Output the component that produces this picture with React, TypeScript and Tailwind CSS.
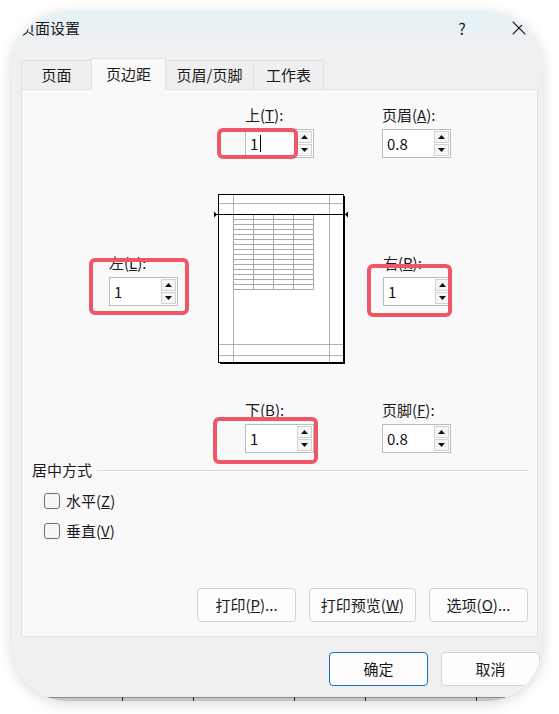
import React from 'react';
import { X } from 'lucide-react';

function Arrow({ up }: { up?: boolean }) {
  return (
    <span className="flex flex-1 items-center justify-center border border-[#d2d2d2] bg-[#f5f5f5]">
      <svg width="7" height="4" viewBox="0 0 7 4">
        <polygon points={up ? '0,4 3.5,0 7,4' : '0,0 3.5,4 7,0'} fill="#111" />
      </svg>
    </span>
  );
}

function Spin({ value, caret }: { value: string; caret?: boolean }) {
  return (
    <div className="flex h-[29px] w-[69px] border border-[#bcbcbc] bg-white">
      <div className="flex flex-1 items-center pl-[4px] text-[15px] leading-none text-[#111]">
        {value}
        {caret && <span className="ml-[2px] h-[17px] w-px bg-black" />}
      </div>
      <div className="flex w-[16px] flex-col gap-px py-px pr-px">
        <Arrow up />
        <Arrow />
      </div>
    </div>
  );
}

function Field({ label, value, caret }: { label: React.ReactNode; value: string; caret?: boolean }) {
  return (
    <div className="flex w-[69px] flex-col">
      <div className="h-[18px] whitespace-nowrap text-[15px] leading-[18px]">{label}</div>
      <div className="mt-[5px]">
        <Spin value={value} caret={caret} />
      </div>
    </div>
  );
}

function Btn({ children, className }: { children: React.ReactNode; className: string }) {
  return (
    <button className={`flex h-[34px] items-center justify-center rounded-[4px] border bg-[#fdfdfd] text-[15px] text-[#1a1a1a] ${className}`}>
      {children}
    </button>
  );
}

function Check({ children }: { children: React.ReactNode }) {
  return (
    <div className="flex h-[18px] items-center gap-[6px] pl-[22px]">
      <span className="h-[16px] w-[16px] rounded-[3px] border border-[#6f6f6f] bg-[#f6f6f6]" />
      <span className="text-[15px] leading-[18px]">{children}</span>
    </div>
  );
}

// 页面预览小图
function Preview() {
  const rows = Array.from({ length: 16 }, (_, i) => 20.5 + i * 5);
  const cols = [20.5, 40.5, 60.5, 80.5, 100.5];
  return (
    <svg width="136" height="172" viewBox="0 0 136 172" className="shrink-0">
      <rect x="5.5" y="0.5" width="125" height="168" fill="#fff" stroke="#000" />
      <line x1="131.5" y1="2" x2="131.5" y2="170" stroke="#000" />
      <line x1="7" y1="169.5" x2="132" y2="169.5" stroke="#000" />
      <g stroke="#b3b3b3">
        <line x1="20.5" y1="1" x2="20.5" y2="168" />
        <line x1="116.5" y1="1" x2="116.5" y2="168" />
        <line x1="6" y1="9.5" x2="130" y2="9.5" />
        <line x1="6" y1="150.5" x2="130" y2="150.5" />
        <line x1="6" y1="161.5" x2="130" y2="161.5" />
      </g>
      <g stroke="#a9a9a9">
        {rows.map((y) => (
          <line key={y} x1="20.5" y1={y} x2="100.5" y2={y} />
        ))}
        {cols.map((x) => (
          <line key={x} x1={x} y1="20.5" x2={x} y2="95.5" />
        ))}
      </g>
      <line x1="1" y1="20.5" x2="134" y2="20.5" stroke="#000" />
      <polygon points="1,17.5 4,20.5 1,23.5" fill="#000" />
      <polygon points="135,17.5 132,20.5 135,23.5" fill="#000" />
    </svg>
  );
}

export default function App() {
  return (
    <div className="h-[714px] w-[559px] overflow-hidden bg-white pl-[12px] pt-[12px] font-['Noto_Sans_CJK_SC','Microsoft_YaHei',sans-serif] text-[#1b1b1b]">
      <div className="h-[689px] w-[530px] overflow-hidden rounded-[56px] shadow-[0_2px_14px_rgba(0,0,0,0.16)]">
        <div className="flex w-[535px] flex-col bg-[#f0f0f0]">
          {/* 标题栏 */}
          <div className="flex h-[46px] items-start bg-gradient-to-b from-[#e5f2f6] to-[#f0f1f1] pt-[7px]">
            <span className="pl-[8px] text-[15px] leading-[18px]">页面设置</span>
            <span className="ml-auto w-[20px] text-center text-[16px] leading-[18px]">?</span>
            <span className="ml-[35px] mr-[16px] -mt-[3px]">
              <X size={24} strokeWidth={1.1} color="#222" />
            </span>
          </div>

          {/* 选项卡 */}
          <div className="flex h-[31px] items-end pl-[9px] text-[15px]">
            <div className="flex h-[29px] w-[70px] items-center justify-center border-l border-t border-[#e2e2e2] bg-[#efefef]">页面</div>
            <div className="relative z-10 -mb-px flex h-[32px] w-[75px] items-center justify-center border-x border-t border-[#e2e2e2] bg-[#f9f9f9] pb-[1px]">页边距</div>
            <div className="flex h-[29px] w-[87px] items-center justify-center border-t border-[#e2e2e2] bg-[#efefef]">页眉/页脚</div>
            <div className="flex h-[29px] w-[71px] items-center justify-center border-x border-t border-[#e2e2e2] bg-[#efefef]">工作表</div>
          </div>

          {/* 面板 */}
          <div className="relative ml-[9px] flex h-[548px] w-[517px] flex-col border border-[#e2e2e2] bg-[#f9f9f9] pt-[16px]">
            <div className="flex pl-[223px]">
              <Field label={<>上(<span className="underline">T</span>):</>} value="1" caret />
              <div className="ml-[68px]">
                <Field label={<>页眉(<span className="underline">A</span>):</>} value="0.8" />
              </div>
            </div>

            <div className="mt-[36px] flex items-start pl-[87px]">
              <div className="mt-[60px]">
                <Field label={<>左(<span className="underline">L</span>):</>} value="1" />
              </div>
              <div className="ml-[35px]">
                <Preview />
              </div>
              <div className="ml-[34px] mt-[60px]">
                <Field label={<>右(<span className="underline">R</span>):</>} value="1" />
              </div>
            </div>

            <div className="mt-[35px] flex pl-[223px]">
              <Field label={<>下(<span className="underline">B</span>):</>} value="1" />
              <div className="ml-[68px]">
                <Field label={<>页脚(<span className="underline">F</span>):</>} value="0.8" />
              </div>
            </div>

            {/* 居中方式 */}
            <div className="mt-[8px] flex items-center pl-[10px] pr-[9px]">
              <span className="text-[15px] leading-[18px]">居中方式</span>
              <span className="ml-[5px] h-px flex-1 bg-[#dcdcdc]" />
            </div>
            <div className="mt-[13px]">
              <Check>水平(<span className="underline">Z</span>)</Check>
            </div>
            <div className="mt-[12px]">
              <Check>垂直(<span className="underline">V</span>)</Check>
            </div>

            <div className="mt-auto flex justify-end gap-[13px] pb-[14px] pr-[9px]">
              <Btn className="w-[99px] border-[#d3d3d3]">打印(<span className="underline">P</span>)...</Btn>
              <Btn className="w-[107px] border-[#d3d3d3]">打印预览(<span className="underline">W</span>)</Btn>
              <Btn className="w-[99px] border-[#d3d3d3]">选项(<span className="underline">O</span>)...</Btn>
            </div>

            {/* 标注框 */}
            <div className="absolute left-[195px] top-[38px] h-[31px] w-[81px] rounded-[6px] border-[4px] border-[#ef5668]" />
            <div className="absolute left-[67px] top-[168px] h-[57px] w-[100px] rounded-[6px] border-[4px] border-[#ef5668]" />
            <div className="absolute left-[345px] top-[174px] h-[53px] w-[85px] rounded-[6px] border-[4px] border-[#ef5668]" />
            <div className="absolute left-[191px] top-[327px] h-[47px] w-[105px] rounded-[6px] border-[4px] border-[#ef5668]" />
          </div>

          {/* 底部按钮 */}
          <div className="mt-[15px] flex justify-end gap-[13px] pb-[11px] pr-[7px]">
            <Btn className="w-[99px] border-[#1a6fc0]">确定</Btn>
            <Btn className="w-[99px] border-[#d3d3d3]">取消</Btn>
          </div>
        </div>
        <svg width="535" height="4" viewBox="0 0 535 4" className="block">
          <rect width="535" height="4" fill="#c4c4c4" />
          <line x1="0" y1="0.5" x2="535" y2="0.5" stroke="#8d8d8d" />
          {[110, 181, 282, 353, 464].map((x) => (
            <line key={x} x1={x + 0.5} y1="0" x2={x + 0.5} y2="4" stroke="#222" />
          ))}
        </svg>
      </div>
    </div>
  );
}
